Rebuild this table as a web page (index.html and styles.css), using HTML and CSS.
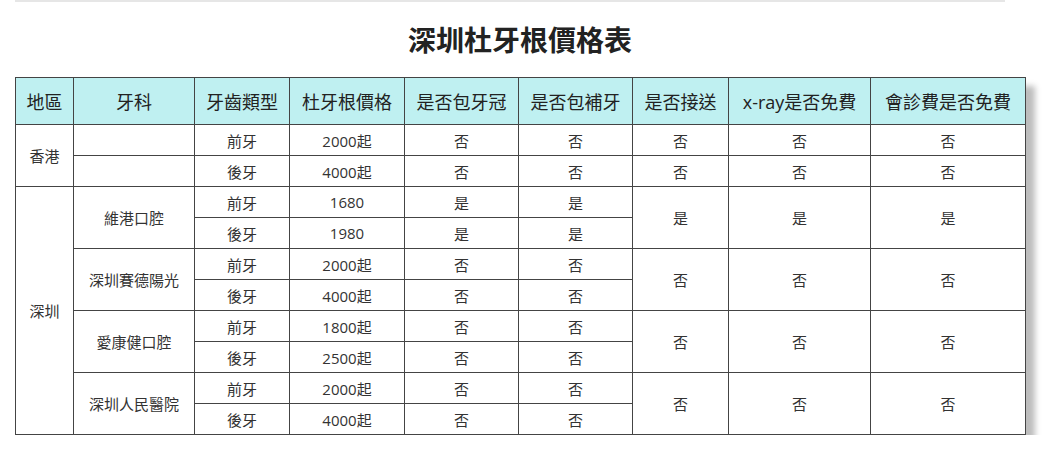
FILE: index.html
```html
<!DOCTYPE html>
<html lang="zh-Hant">
<head>
<meta charset="utf-8">
<title>深圳杜牙根價格表</title>
<link rel="stylesheet" href="styles.css">
</head>
<body>
<div class="page">
  <div class="topline"></div>
  <h1 class="title">深圳杜牙根價格表</h1>
  <table class="price">
    <colgroup>
      <col class="c1"><col class="c2"><col class="c3"><col class="c4"><col class="c5"><col class="c6"><col class="c7"><col class="c8"><col class="c9">
    </colgroup>
    <thead>
      <tr>
        <th>地區</th><th>牙科</th><th>牙齒類型</th><th>杜牙根價格</th><th>是否包牙冠</th><th>是否包補牙</th><th>是否接送</th><th>x-ray是否免費</th><th>會診費是否免費</th>
      </tr>
    </thead>
    <tbody>
      <tr><td rowspan="2">香港</td><td></td><td>前牙</td><td>2000起</td><td>否</td><td>否</td><td>否</td><td>否</td><td>否</td></tr>
      <tr><td></td><td>後牙</td><td>4000起</td><td>否</td><td>否</td><td>否</td><td>否</td><td>否</td></tr>
      <tr><td rowspan="8">深圳</td><td rowspan="2">維港口腔</td><td>前牙</td><td>1680</td><td>是</td><td>是</td><td rowspan="2">是</td><td rowspan="2">是</td><td rowspan="2">是</td></tr>
      <tr><td>後牙</td><td>1980</td><td>是</td><td>是</td></tr>
      <tr><td rowspan="2">深圳賽德陽光</td><td>前牙</td><td>2000起</td><td>否</td><td>否</td><td rowspan="2">否</td><td rowspan="2">否</td><td rowspan="2">否</td></tr>
      <tr><td>後牙</td><td>4000起</td><td>否</td><td>否</td></tr>
      <tr><td rowspan="2">愛康健口腔</td><td>前牙</td><td>1800起</td><td>否</td><td>否</td><td rowspan="2">否</td><td rowspan="2">否</td><td rowspan="2">否</td></tr>
      <tr><td>後牙</td><td>2500起</td><td>否</td><td>否</td></tr>
      <tr><td rowspan="2">深圳人民醫院</td><td>前牙</td><td>2000起</td><td>否</td><td>否</td><td rowspan="2">否</td><td rowspan="2">否</td><td rowspan="2">否</td></tr>
      <tr><td>後牙</td><td>4000起</td><td>否</td><td>否</td></tr>
    </tbody>
  </table>
</div>
</body>
</html>
```
FILE: styles.css
```css
html, body {
  margin: 0;
  padding: 0;
  background: #ffffff;
}
body {
  font-family: "Open Sans", "Noto Sans CJK TC", sans-serif;
  color: #333333;
}
.page {
  padding: 0 0 0 15px;
}
.topline {
  width: 990px;
  height: 2px;
  background: #e6e6e6;
}
.title {
  margin: 18px 0 17px 0;
  width: 1010px;
  text-align: center;
  font-size: 28px;
  line-height: 40px;
  font-weight: 700;
  color: #222222;
}
.price {
  width: 1010px;
  table-layout: fixed;
  border-collapse: collapse;
  border: 1px solid #444444;
  box-shadow: 9px 9px 6px #bdbdbd;
}
.c1 { width: 58px; }
.c2 { width: 121px; }
.c3 { width: 95px; }
.c4 { width: 115px; }
.c5 { width: 114px; }
.c6 { width: 114px; }
.c7 { width: 96px; }
.c8 { width: 142px; }
.c9 { width: 155px; }
.price th,
.price td {
  border: 1px solid #444444;
  text-align: center;
  vertical-align: middle;
  padding: 0;
  white-space: nowrap;
}
.price th {
  height: 46px;
  background: #bff0f1;
  font-size: 18px;
  font-weight: 400;
  color: #222222;
}
.price td {
  height: 30px;
  font-size: 15px;
  color: #333333;
}
```
